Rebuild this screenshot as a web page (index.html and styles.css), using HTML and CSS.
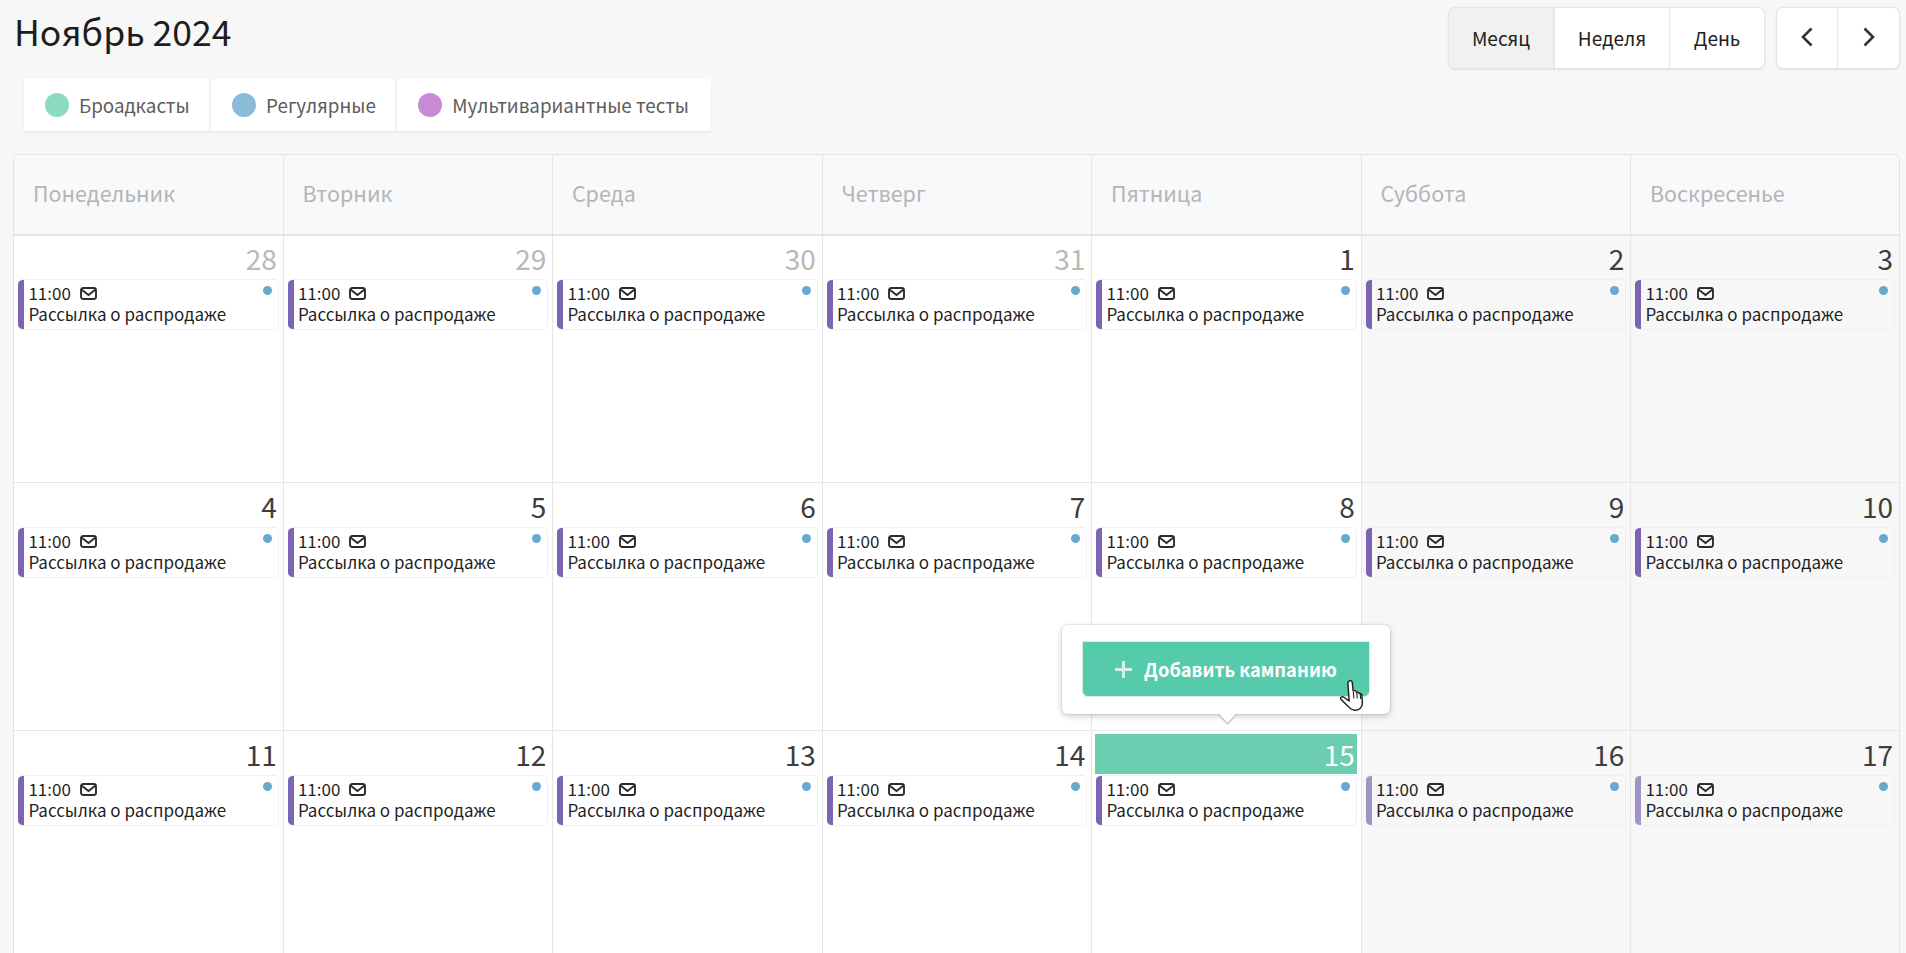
FILE: index.html
```html
<!DOCTYPE html>
<html lang="ru">
<head>
<meta charset="utf-8">
<title>Календарь</title>
<link rel="stylesheet" href="styles.css">
</head>
<body>
<svg class="defs" width="0" height="0"><defs>
<symbol id="mail" viewBox="0 0 17 13"><rect x="1" y="1" width="15" height="11" rx="2.2" fill="none" stroke="currentColor" stroke-width="1.9"/><path d="M1.5 2.500 8.500 8 15.500 2.500" fill="none" stroke="currentColor" stroke-width="1.900"/></symbol>
</defs></svg>
<div class="page">
  <header class="top">
    <div class="top-left">
      <h1 class="title">Ноябрь 2024</h1>
      <ul class="legend">
        <li class="legend-item"><span class="legend-dot green"></span>Броадкасты</li>
        <li class="legend-item"><span class="legend-dot blue"></span>Регулярные</li>
        <li class="legend-item"><span class="legend-dot violet"></span>Мультивариантные тесты</li>
      </ul>
    </div>
    <div class="controls">
      <div class="btn-group">
        <button class="btn btn-month active">Месяц</button>
        <button class="btn btn-week">Неделя</button>
        <button class="btn btn-day">День</button>
      </div>
      <div class="btn-group">
        <button class="btn btn-nav"><svg width="14" height="20" viewBox="0 0 14 20"><path d="M11.500 1.500 3 10l8.500 8.500" fill="none" stroke="#333" stroke-width="2.600"/></svg></button>
        <button class="btn btn-nav"><svg width="14" height="20" viewBox="0 0 14 20"><path d="M2.500 1.500 11 10l-8.500 8.500" fill="none" stroke="#333" stroke-width="2.600"/></svg></button>
      </div>
    </div>
  </header>

  <section class="calendar">
    <div class="head">
      <div class="head-cell">Понедельник</div>
      <div class="head-cell">Вторник</div>
      <div class="head-cell">Среда</div>
      <div class="head-cell">Четверг</div>
      <div class="head-cell">Пятница</div>
      <div class="head-cell">Суббота</div>
      <div class="head-cell">Воскресенье</div>
    </div>
    <div class="week">
      <div class="day"><div class="date muted">28</div><div class="event"><div class="ev-time">11:00<svg class="mail"><use href="#mail"/></svg></div><div class="ev-name">Рассылка о распродаже</div><i class="ev-dot"></i></div></div>
      <div class="day"><div class="date muted">29</div><div class="event"><div class="ev-time">11:00<svg class="mail"><use href="#mail"/></svg></div><div class="ev-name">Рассылка о распродаже</div><i class="ev-dot"></i></div></div>
      <div class="day"><div class="date muted">30</div><div class="event"><div class="ev-time">11:00<svg class="mail"><use href="#mail"/></svg></div><div class="ev-name">Рассылка о распродаже</div><i class="ev-dot"></i></div></div>
      <div class="day"><div class="date muted">31</div><div class="event"><div class="ev-time">11:00<svg class="mail"><use href="#mail"/></svg></div><div class="ev-name">Рассылка о распродаже</div><i class="ev-dot"></i></div></div>
      <div class="day"><div class="date">1</div><div class="event"><div class="ev-time">11:00<svg class="mail"><use href="#mail"/></svg></div><div class="ev-name">Рассылка о распродаже</div><i class="ev-dot"></i></div></div>
      <div class="day weekend"><div class="date">2</div><div class="event"><div class="ev-time">11:00<svg class="mail"><use href="#mail"/></svg></div><div class="ev-name">Рассылка о распродаже</div><i class="ev-dot"></i></div></div>
      <div class="day weekend"><div class="date">3</div><div class="event"><div class="ev-time">11:00<svg class="mail"><use href="#mail"/></svg></div><div class="ev-name">Рассылка о распродаже</div><i class="ev-dot"></i></div></div>
    </div>
    <div class="week">
      <div class="day"><div class="date">4</div><div class="event"><div class="ev-time">11:00<svg class="mail"><use href="#mail"/></svg></div><div class="ev-name">Рассылка о распродаже</div><i class="ev-dot"></i></div></div>
      <div class="day"><div class="date">5</div><div class="event"><div class="ev-time">11:00<svg class="mail"><use href="#mail"/></svg></div><div class="ev-name">Рассылка о распродаже</div><i class="ev-dot"></i></div></div>
      <div class="day"><div class="date">6</div><div class="event"><div class="ev-time">11:00<svg class="mail"><use href="#mail"/></svg></div><div class="ev-name">Рассылка о распродаже</div><i class="ev-dot"></i></div></div>
      <div class="day"><div class="date">7</div><div class="event"><div class="ev-time">11:00<svg class="mail"><use href="#mail"/></svg></div><div class="ev-name">Рассылка о распродаже</div><i class="ev-dot"></i></div></div>
      <div class="day"><div class="date">8</div><div class="event"><div class="ev-time">11:00<svg class="mail"><use href="#mail"/></svg></div><div class="ev-name">Рассылка о распродаже</div><i class="ev-dot"></i></div></div>
      <div class="day weekend"><div class="date">9</div><div class="event"><div class="ev-time">11:00<svg class="mail"><use href="#mail"/></svg></div><div class="ev-name">Рассылка о распродаже</div><i class="ev-dot"></i></div></div>
      <div class="day weekend"><div class="date">10</div><div class="event"><div class="ev-time">11:00<svg class="mail"><use href="#mail"/></svg></div><div class="ev-name">Рассылка о распродаже</div><i class="ev-dot"></i></div></div>
    </div>
    <div class="week">
      <div class="day"><div class="date">11</div><div class="event"><div class="ev-time">11:00<svg class="mail"><use href="#mail"/></svg></div><div class="ev-name">Рассылка о распродаже</div><i class="ev-dot"></i></div></div>
      <div class="day"><div class="date">12</div><div class="event"><div class="ev-time">11:00<svg class="mail"><use href="#mail"/></svg></div><div class="ev-name">Рассылка о распродаже</div><i class="ev-dot"></i></div></div>
      <div class="day"><div class="date">13</div><div class="event"><div class="ev-time">11:00<svg class="mail"><use href="#mail"/></svg></div><div class="ev-name">Рассылка о распродаже</div><i class="ev-dot"></i></div></div>
      <div class="day"><div class="date">14</div><div class="event"><div class="ev-time">11:00<svg class="mail"><use href="#mail"/></svg></div><div class="ev-name">Рассылка о распродаже</div><i class="ev-dot"></i></div></div>
      <div class="day today"><div class="popover"><button class="add-btn"><svg class="plus" width="17" height="17" viewBox="0 0 17 17"><path d="M8.500 0v17M0 8.500h17" stroke="#fff" stroke-opacity=".75" stroke-width="3"/></svg>Добавить кампанию</button></div><div class="date">15</div><div class="event"><div class="ev-time">11:00<svg class="mail"><use href="#mail"/></svg></div><div class="ev-name">Рассылка о распродаже</div><i class="ev-dot"></i></div></div>
      <div class="day weekend"><div class="date">16</div><div class="event faded"><div class="ev-time">11:00<svg class="mail"><use href="#mail"/></svg></div><div class="ev-name">Рассылка о распродаже</div><i class="ev-dot"></i></div></div>
      <div class="day weekend"><div class="date">17</div><div class="event faded"><div class="ev-time">11:00<svg class="mail"><use href="#mail"/></svg></div><div class="ev-name">Рассылка о распродаже</div><i class="ev-dot"></i></div></div>
    </div>
  </section>
</div>
<svg class="cursor" width="24" height="33" viewBox="1 1 21 33" preserveAspectRatio="none"><path d="M9 2c1.2-1 2.6 0 2.8 1.6l.7 8.4 1-.3c.9-.2 1.6.3 1.8 1.1l.1.6c.7-.6 1.9-.4 2.3.7l.1.6c.8-.5 2-.1 2.2 1l.5 6c.3 3.800-.5 6.500-2.500 8.300-1.500 1.300-3.500 1.500-5.300 1-2.300-.7-4-2.500-5.700-4.800L2 20.500c-.8-1-.6-2 .2-2.500.8-.5 1.700-.2 2.500.5L9 22 7.900 4c0-.8.400-1.500 1.100-2z" fill="#fff" stroke="#222" stroke-width="1.300" stroke-linejoin="round"/><path d="M12.700 13l.5 6.500M15.700 13.500l.4 6M18.700 15l.3 5" fill="none" stroke="#222" stroke-width="1"/></svg>
</body>
</html>
```

FILE: styles.css
```css
* { box-sizing: border-box; }
html, body { margin: 0; height: 100%; overflow: hidden; }
body {
  background: #f7f7f7;
  color: #222;
  font-family: "Noto Sans CJK SC", "Noto Sans", sans-serif;
  position: relative;
}
.defs { position: absolute; }
.page { padding: 8px 6px 0 13.400px; }
.top { display: flex; justify-content: space-between; align-items: flex-start; height: 146px; }
.title { margin: -2px 0 0 .6px; font-size: 35.500px; font-weight: 400; line-height: 50px; color: #1d1d1d; }
.legend {
  list-style: none;
  margin: 23px 0 0 10.600px;
  padding: 0;
  display: flex;
  height: 52px;
  background: #fff;
  box-shadow: 0 1px 2px rgba(0,0,0,.08);
}
.legend-item {
  display: flex;
  align-items: center;
  gap: 10px;
  padding: 0 19.500px 2px 21px;
  font-size: 18.800px;
  color: #5d5d5d;
  border-right: 2px solid #f1f1f1;
}
.legend-item:last-child { border-right: 0; padding-right: 22px; }
.legend-dot { width: 24px; height: 24px; border-radius: 50%; position: relative; top: 1px; }
.green { background: #8adbbf; }
.blue { background: #8abbd9; }
.violet { background: #c88ad6; }
.controls { display: flex; gap: 13px; margin-right: 1px; }
.btn-group {
  display: flex;
  height: 60px;
  background: #fff;
  border-radius: 6px;
  box-shadow: 0 0 0 1px #e4e4e4, 0 1px 3px rgba(0,0,0,.18);
  overflow: hidden;
}
.btn {
  border: 0;
  border-right: 1px solid #e8e8e8;
  background: none;
  padding: 0 0 2px;
  font: 400 19px "Noto Sans CJK SC", "Noto Sans", sans-serif;
  color: #222;
}
.btn:last-child { border-right: 0; }
.btn.active { background: #f1f1f1; border-right: 2px solid #e8e8e8; }
.btn-month { width: 106px; }
.btn-week { width: 115px; }
.btn-day { width: 94px; }
.btn-nav { width: 61px; display: flex; align-items: center; justify-content: center; }
.calendar {
  background: #fff;
  border: 1px solid #e3e3e3;
  border-bottom: 0;
  border-radius: 6px 6px 0 0;
}
.head { display: grid; grid-template-columns: repeat(6, 269.500px) 1fr; height: 81px; border-bottom: 2px solid #e6e6e6; background: #f8f9fb; border-radius: 6px 6px 0 0; }
.head-cell {
  display: flex;
  align-items: center;
  padding-left: 18.500px;
  padding-bottom: 4px;
  font-size: 21.500px;
  color: #b5b5b5;
  border-right: 1px solid #e6e6e6;
}
.head-cell:last-child { border-right: 0; }
.week { display: grid; grid-template-columns: repeat(6, 269.500px) 1fr; height: 248px; border-bottom: 1px solid #e6e6e6; }
.head + .week { height: 247px; }
.head + .week .day { padding-top: 2px; }
.day { position: relative; padding: 3px 4px 0 3px; border-right: 1px solid #e6e6e6; min-width: 0; }
.day:last-child { border-right: 0; }
.weekend { background: #f7f7f7; }
.date { height: 40px; line-height: 41px; text-align: right; font-size: 28px; color: #3d3d3d; padding-right: 2px; }
.date.muted { color: #b9b9b9; }
.today .date { background: #6dcdb0; color: #fff; }
.event {
  position: relative;
  height: 51px;
  margin: 1px 0 0 1px;
  padding: 1px 0 0 10px;
  background: #fff;
  border: 1px solid #efefef;
  border-left: 0;
  border-radius: 5px;
  font-size: 17px;
  line-height: 21px;
  color: #1f1f1f;
  overflow: hidden;
}
.event::before { content: ""; position: absolute; left: 0; top: 0; bottom: 0; width: 6px; background: #7b65b2; }
.faded::before { background: #a193c6; }
.weekend .event { background: #f7f7f7; }
.ev-time { display: flex; align-items: center; height: 22px; }
.mail { width: 17px; height: 13px; margin-left: 9px; color: #2c2c2c; position: relative; top: 1px; }
.ev-dot { position: absolute; right: 6px; top: 6px; width: 9px; height: 9px; border-radius: 50%; background: #6aa9cf; }
.popover {
  position: absolute;
  left: -30px;
  bottom: calc(100% + 17px);
  width: 328px;
  height: 89px;
  padding: 16px 20px 0 20px;
  background: #fff;
  border-radius: 6px;
  box-shadow: 0 0 0 1px rgba(0,0,0,.05), 0 2px 6px rgba(0,0,0,.22);
  z-index: 2;
}
.popover::before, .popover::after {
  content: "";
  position: absolute;
  left: 155px;
  width: 20px;
  height: 11px;
  clip-path: polygon(0 0, 100% 0, 50% 100%);
}
.popover::before { bottom: -11px; background: #c4c4c4; }
.popover::after { bottom: -9px; background: #fff; }
.add-btn {
  display: flex;
  align-items: center;
  justify-content: center;
  gap: 12px;
  width: 288px;
  height: 56px;
  padding: 0 1px 0 0;
  border: 1px solid #dfe9e6;
  border-radius: 0 0 6px 6px;
  background: #55cbab;
  color: #fff;
  font: 700 18.300px "Noto Sans CJK SC", "Noto Sans", sans-serif;
}
.cursor { position: absolute; left: 1340px; top: 680px; z-index: 3; }
```
